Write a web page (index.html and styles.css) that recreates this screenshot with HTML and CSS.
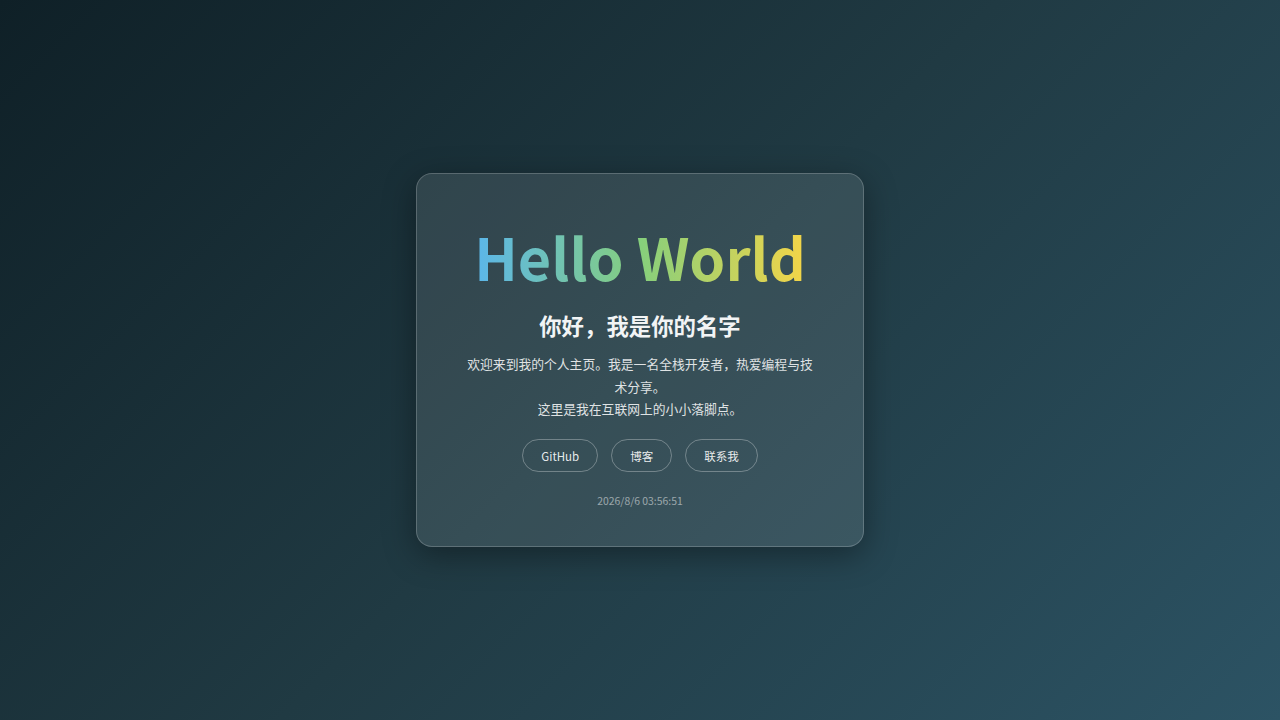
FILE: index.html
```html
<!DOCTYPE html>
<html lang="zh-CN">
<head>
<meta charset="utf-8">
<title>Hello World</title>
<link rel="stylesheet" href="styles.css">
</head>
<body>
<main class="page">
  <section class="card">
    <h1 class="title">Hello World</h1>
    <h2 class="subtitle">你好，我是你的名字</h2>
    <p class="intro">欢迎来到我的个人主页。我是一名全栈开发者，热爱编程与技术分享。<br>这里是我在互联网上的小小落脚点。</p>
    <nav class="links">
      <a class="btn" href="#">GitHub</a>
      <a class="btn" href="#">博客</a>
      <a class="btn" href="#">联系我</a>
    </nav>
    <div class="time">2026/8/6 03:56:51</div>
  </section>
</main>
</body>
</html>
```

FILE: styles.css
```css
* { box-sizing: border-box; }
html, body { margin: 0; padding: 0; height: 100%; }
body {
  font-family: "Noto Sans CJK SC", "Noto Sans", sans-serif;
  background: linear-gradient(135deg, #0f2027 0%, #203a43 50%, #2c5364 100%);
  color: #fff;
}
.page {
  height: 100vh;
  display: flex;
  align-items: center;
  justify-content: center;
}
.card {
  width: 448px;
  padding: 48px 48px 37px;
  background: rgba(255, 255, 255, 0.1);
  border: 1px solid rgba(255, 255, 255, 0.2);
  border-radius: 16px;
  box-shadow: 0 8px 32px rgba(0, 0, 0, 0.37);
  text-align: center;
}
.title {
  margin: 0 0 19px;
  font-size: 57.6px;
  line-height: 1.2;
  font-weight: 700;
  background: linear-gradient(90deg, #5bb6ea 0%, #86cf7c 50%, #f4d548 100%);
  -webkit-background-clip: text;
  background-clip: text;
  color: transparent;
  display: inline-block;
  white-space: nowrap;
}
.subtitle {
  margin: 0 0 11px;
  font-size: 22.4px;
  line-height: 1.4;
  font-weight: 700;
  color: #f2f4f5;
}
.intro {
  margin: 0 0 18px;
  font-size: 12.8px;
  line-height: 1.78;
  color: rgba(255, 255, 255, 0.85);
}
.links {
  display: flex;
  justify-content: center;
  gap: 13px;
  margin-bottom: 21px;
}
.btn {
  display: inline-flex;
  align-items: center;
  height: 33px;
  padding: 0 18px;
  border: 1px solid rgba(255, 255, 255, 0.3);
  border-radius: 999px;
  color: rgba(255, 255, 255, 0.9);
  text-decoration: none;
  font-size: 11.5px;
}
.time {
  font-size: 10.4px;
  line-height: 1.5;
  color: rgba(255, 255, 255, 0.5);
}
```
